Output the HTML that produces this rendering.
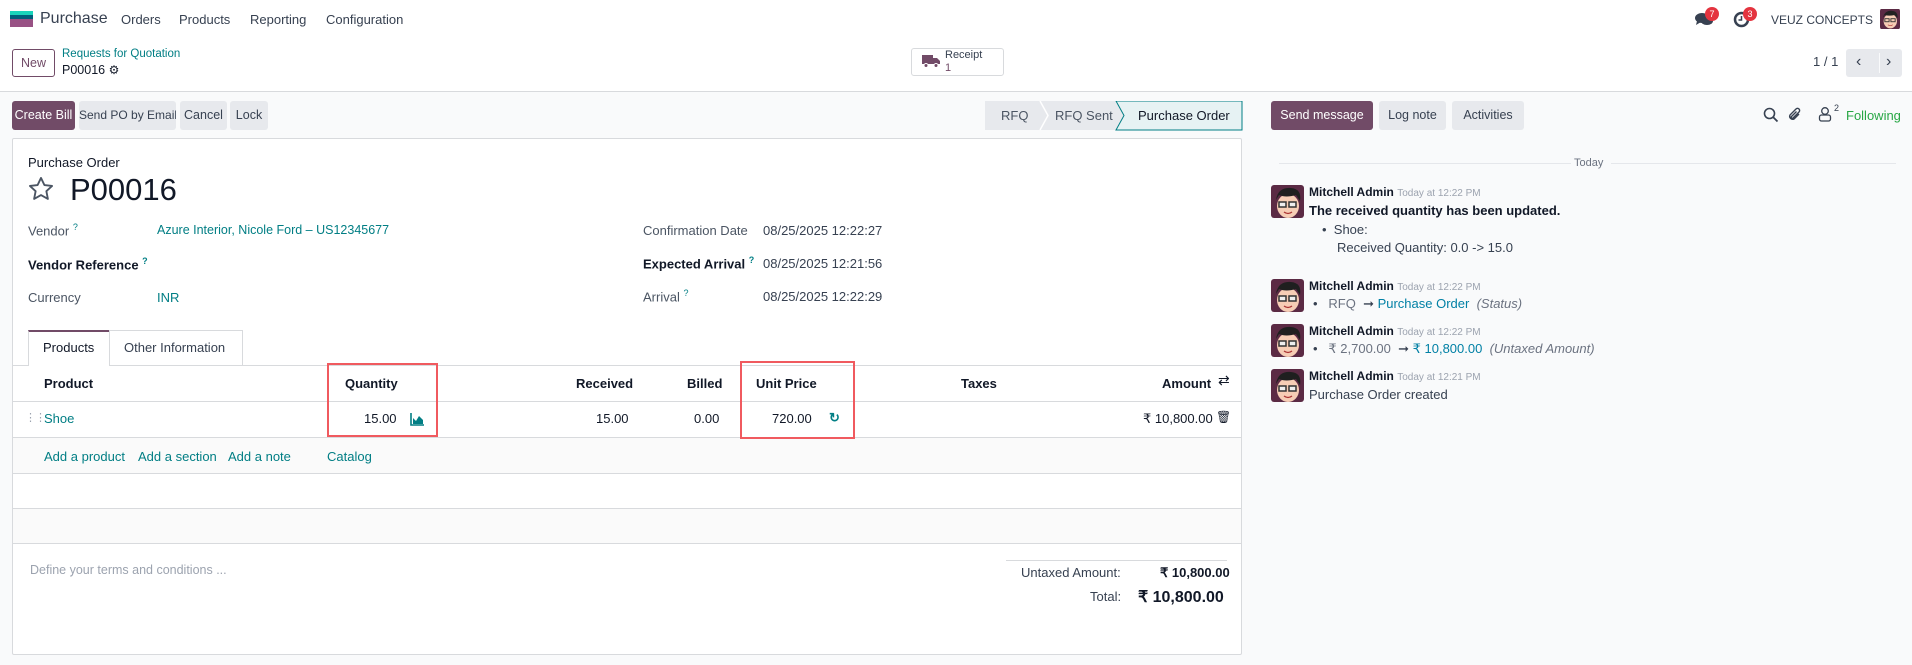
<!DOCTYPE html>
<html><head><meta charset="utf-8">
<style>
*{box-sizing:border-box;margin:0;padding:0}
body{width:1912px;height:665px;position:relative;overflow:hidden;background:#f9fafb;font-family:"Liberation Sans",sans-serif;font-size:13px;color:#374151}
.a{position:absolute;white-space:nowrap}
.teal{color:#017e84}
.btn{position:absolute;height:29px;line-height:29px;border-radius:3px;background:#e7e9ed;color:#374151;font-size:12.5px;text-align:center;white-space:nowrap;overflow:hidden}
.pri{background:#714b67;color:#fff}
.lbl{color:#4b5563}
.b{font-weight:bold;color:#111827}
sup{font-size:9px;color:#017e84}
.hl{position:absolute;left:13px;width:1228px;height:1px;background:#d8dadd}
.av{position:absolute;width:33px;height:33px;border-radius:3px;overflow:hidden}
.gray{color:#9ca3af;font-size:11px}
</style></head><body>
<div class="a" style="left:0;top:0;width:1912px;height:92px;background:#fff;border-bottom:1px solid #d8dadd"></div>
<div class="a" style="left:10px;top:11px;width:23px;height:4px;background:#1ad3bb"></div>
<div class="a" style="left:10px;top:15px;width:23px;height:4px;background:#005e7a"></div>
<div class="a" style="left:10px;top:19px;width:23px;height:8px;background:#985184"></div>
<div class="a" style="left:40px;top:10px;font-size:16px;color:#374151">Purchase</div>
<div class="a" style="left:121px;top:12px;font-size:13px;color:#374151">Orders</div>
<div class="a" style="left:179px;top:12px;font-size:13px;color:#374151">Products</div>
<div class="a" style="left:250px;top:12px;font-size:13px;color:#374151">Reporting</div>
<div class="a" style="left:326px;top:12px;font-size:13px;color:#374151">Configuration</div>
<svg class="a" style="left:1694px;top:10px" width="20" height="18" viewBox="0 0 20 18"><ellipse cx="8" cy="8" rx="7" ry="5" fill="#374151"/><path d="M3 11 L2 15 L7 12Z" fill="#374151"/><ellipse cx="13" cy="11" rx="6" ry="4" fill="#374151"/></svg>
<div class="a" style="left:1705px;top:7px;width:14px;height:14px;border-radius:7px;background:#e4343f;color:#fff;font-size:9px;text-align:center;line-height:14px">7</div>
<svg class="a" style="left:1733px;top:11px" width="17" height="17" viewBox="0 0 17 17"><circle cx="8.5" cy="8.5" r="6.5" fill="none" stroke="#374151" stroke-width="2.5"/><path d="M8.5 5v4h-3" stroke="#374151" stroke-width="1.5" fill="none"/></svg>
<div class="a" style="left:1743px;top:7px;width:14px;height:14px;border-radius:7px;background:#e4343f;color:#fff;font-size:9px;text-align:center;line-height:14px">3</div>
<div class="a" style="left:1771px;top:13px;font-size:12px;color:#374151">VEUZ CONCEPTS</div>
<div class="av" style="left:1880px;top:8px;width:20px;height:22px"><svg width="20" height="22" viewBox="0 0 33 33"><rect width="33" height="33" fill="#5b2a44"/><ellipse cx="17" cy="20" rx="11" ry="12" fill="#f6cdb5"/><path d="M5 14 Q8 2 20 3 Q30 4 29 15 L24 10 Q15 12 8 10Z" fill="#222"/><rect x="8" y="16" width="7" height="5" fill="none" stroke="#333" stroke-width="1.5"/><rect x="18" y="16" width="7" height="5" fill="none" stroke="#333" stroke-width="1.5"/><path d="M13 26 Q17 29 21 26" stroke="#a33" fill="none"/></svg></div>
<div class="a" style="left:12px;top:49px;width:43px;height:28px;border:1px solid #714b67;border-radius:3px;text-align:center;line-height:26px;color:#714b67;font-size:12.5px">New</div>
<div class="a teal" style="left:62px;top:48px;font-size:11.5px">Requests for Quotation</div>
<div class="a" style="left:62px;top:63px;font-size:12.5px;color:#111827">P00016 <span style="font-size:12px">⚙</span></div>
<div class="a" style="left:911px;top:48px;width:93px;height:28px;border:1px solid #d8dadd;border-radius:3px;background:#fff"></div>
<svg class="a" style="left:922px;top:55px" width="18" height="13" viewBox="0 0 18 13"><rect x="0" y="0" width="11" height="9" fill="#714b67"/><path d="M11 3h4l3 3v3h-7z" fill="#714b67"/><circle cx="4" cy="10.5" r="2" fill="#714b67" stroke="#fff"/><circle cx="14" cy="10.5" r="2" fill="#714b67" stroke="#fff"/></svg>
<div class="a" style="left:945px;top:49px;font-size:11px;color:#374151;line-height:13px">Receipt<br><span style="color:#714b67">1</span></div>
<div class="a" style="left:1813px;top:54px;font-size:13px;color:#374151">1 / 1</div>
<div class="a" style="left:1846px;top:49px;width:56px;height:28px;background:#e7e9ed;border-radius:3px"></div>
<div class="a" style="left:1856px;top:53px;font-size:16px;color:#374151">‹</div>
<div class="a" style="left:1879px;top:53px;width:1px;height:20px;background:#f9fafb"></div>
<div class="a" style="left:1886px;top:53px;font-size:16px;color:#374151">›</div>
<div class="btn pri" style="left:12px;top:101px;width:63px">Create Bill</div>
<div class="btn" style="left:79px;top:101px;width:97px;font-size:12px">Send PO by Email</div>
<div class="btn" style="left:180px;top:101px;width:47px">Cancel</div>
<div class="btn" style="left:230px;top:101px;width:38px">Lock</div>
<svg class="a" style="left:985px;top:101px" width="258" height="30" viewBox="0 0 258 30"><rect x="0" y="0" width="160" height="29" fill="#e7e9ed"/><path d="M55 0 L63 14.5 L55 29" stroke="#fff" fill="none" stroke-width="1.5"/><path d="M131 0 L257 0 L257 29 L131 29 L139 14.5Z" fill="#e6f2f3" stroke="#017e84"/></svg>
<div class="a" style="left:1001px;top:108px;color:#4b5563">RFQ</div>
<div class="a" style="left:1055px;top:108px;color:#4b5563">RFQ Sent</div>
<div class="a" style="left:1138px;top:108px;color:#111827">Purchase Order</div>
<div class="a" style="left:12px;top:138px;width:1230px;height:517px;background:#fff;border:1px solid #d8dadd;border-radius:2px"></div>
<div class="a" style="left:28px;top:155px;font-size:13px;color:#111827">Purchase Order</div>
<svg class="a" style="left:27px;top:175px" width="28" height="28" viewBox="0 0 24 24"><path d="M12 2.5l2.9 6.1 6.6.8-4.9 4.5 1.3 6.6L12 17.2l-5.9 3.3 1.3-6.6-4.9-4.5 6.6-.8z" fill="none" stroke="#4b5563" stroke-width="1.6" stroke-linejoin="round"/></svg>
<div class="a" style="left:70px;top:172px;font-size:31px;color:#111827">P00016</div>
<div class="a lbl" style="left:28px;top:222px">Vendor <sup>?</sup></div>
<div class="a teal" style="left:157px;top:223px;font-size:12.5px">Azure Interior, Nicole Ford – US12345677</div>
<div class="a b" style="left:28px;top:256px">Vendor Reference <sup>?</sup></div>
<div class="a lbl" style="left:28px;top:290px">Currency</div>
<div class="a teal" style="left:157px;top:290px">INR</div>
<div class="a lbl" style="left:643px;top:223px">Confirmation Date</div>
<div class="a" style="left:763px;top:223px">08/25/2025 12:22:27</div>
<div class="a b" style="left:643px;top:255px">Expected Arrival <sup>?</sup></div>
<div class="a" style="left:763px;top:256px">08/25/2025 12:21:56</div>
<div class="a lbl" style="left:643px;top:288px">Arrival <sup>?</sup></div>
<div class="a" style="left:763px;top:289px">08/25/2025 12:22:29</div>
<div class="a" style="left:13px;top:365px;width:1228px;height:1px;background:#d8dadd"></div>
<div class="a" style="left:28px;top:330px;width:82px;height:36px;background:#fff;border:1px solid #d8dadd;border-bottom:none;border-top:2px solid #714b67"></div>
<div class="a" style="left:43px;top:340px;color:#111827">Products</div>
<div class="a" style="left:109px;top:330px;width:134px;height:35px;border:1px solid #d8dadd;border-bottom:none"></div>
<div class="a" style="left:124px;top:340px;color:#374151">Other Information</div>
<div class="a b" style="left:44px;top:376px">Product</div>
<div class="a b" style="left:345px;top:376px">Quantity</div>
<div class="a b" style="left:576px;top:376px">Received</div>
<div class="a b" style="left:687px;top:376px">Billed</div>
<div class="a b" style="left:756px;top:376px">Unit Price</div>
<div class="a b" style="left:961px;top:376px">Taxes</div>
<div class="a b" style="left:1162px;top:376px">Amount</div>
<div class="a" style="left:1218px;top:372px;font-size:14px;color:#111827">⇄</div>
<div class="hl" style="top:401px"></div>
<div class="a" style="left:25px;top:411px;color:#9ca3af;font-size:11px;letter-spacing:-1px">⋮⋮</div>
<div class="a teal" style="left:44px;top:411px">Shoe</div>
<div class="a" style="left:364px;top:411px;color:#111827">15.00</div>
<svg class="a" style="left:410px;top:413px" width="14" height="13" viewBox="0 0 14 13"><path d="M1 0v12h13" stroke="#017e84" stroke-width="1.6" fill="none"/><path d="M3 11V5l3 3 3-5 4 4v4z" fill="#017e84"/></svg>
<div class="a" style="left:596px;top:411px;color:#111827">15.00</div>
<div class="a" style="left:694px;top:411px;color:#111827">0.00</div>
<div class="a" style="left:772px;top:411px;color:#111827">720.00</div>
<div class="a teal" style="left:829px;top:410px;font-size:13px;font-weight:bold">↻</div>
<div class="a" style="left:1143px;top:411px;color:#111827">₹ 10,800.00</div>
<div class="a" style="left:1216px;top:410px;font-size:12px;color:#111827">🗑</div>
<div class="hl" style="top:437px"></div>
<div class="a" style="left:13px;top:438px;width:1228px;height:35px;background:#fafafa"></div>
<div class="a teal" style="left:44px;top:449px">Add a product</div>
<div class="a teal" style="left:138px;top:449px">Add a section</div>
<div class="a teal" style="left:228px;top:449px">Add a note</div>
<div class="a teal" style="left:327px;top:449px">Catalog</div>
<div class="hl" style="top:473px"></div>
<div class="hl" style="top:508px"></div>
<div class="a" style="left:13px;top:509px;width:1228px;height:34px;background:#fafafa"></div>
<div class="hl" style="top:543px"></div>
<div class="a" style="left:327px;top:363px;width:111px;height:74px;border:2px solid #f05a5f"></div>
<div class="a" style="left:740px;top:361px;width:115px;height:78px;border:2px solid #f05a5f"></div>
<div class="a" style="left:30px;top:563px;color:#9ca3af;font-size:12.5px">Define your terms and conditions ...</div>
<div class="a" style="left:1006px;top:560px;width:221px;height:1px;background:#d8dadd"></div>
<div class="a" style="left:1021px;top:565px;color:#374151">Untaxed Amount:</div>
<div class="a b" style="left:1160px;top:565px">₹ 10,800.00</div>
<div class="a" style="left:1090px;top:589px;color:#374151">Total:</div>
<div class="a b" style="left:1138px;top:587px;font-size:16px">₹ 10,800.00</div>
<div class="btn pri" style="left:1271px;top:101px;width:102px">Send message</div>
<div class="btn" style="left:1379px;top:101px;width:67px">Log note</div>
<div class="btn" style="left:1452px;top:101px;width:72px">Activities</div>
<svg class="a" style="left:1763px;top:107px" width="16" height="16" viewBox="0 0 16 16"><circle cx="6.5" cy="6.5" r="5" fill="none" stroke="#374151" stroke-width="1.6"/><path d="M10 10l4.5 4.5" stroke="#374151" stroke-width="1.8"/></svg>
<svg class="a" style="left:1787px;top:106px" width="16" height="17" viewBox="0 0 16 17"><path d="M12 8l-5 5a3 3 0 01-4-4l6-6a2 2 0 013 3l-6 6a1 1 0 01-1.5-1.5l5-5" fill="none" stroke="#374151" stroke-width="1.4"/></svg>
<svg class="a" style="left:1818px;top:106px" width="14" height="16" viewBox="0 0 14 16"><circle cx="7" cy="5" r="3.3" fill="none" stroke="#374151" stroke-width="1.3"/><rect x="1.5" y="9" width="11" height="6" rx="2" fill="none" stroke="#374151" stroke-width="1.3"/></svg>
<div class="a" style="left:1834px;top:103px;font-size:9px;color:#374151">2</div>
<div class="a" style="left:1846px;top:108px;color:#28a745;font-size:13px">Following</div>
<div class="a" style="left:1279px;top:163px;width:292px;height:1px;background:#e5e7eb"></div>
<div class="a" style="left:1574px;top:157px;color:#6b7280;font-size:11px">Today</div>
<div class="a" style="left:1611px;top:163px;width:285px;height:1px;background:#e5e7eb"></div>
<svg width="0" height="0" style="position:absolute"><defs><g id="face"><rect width="33" height="33" fill="#5b2a44"/><ellipse cx="17" cy="21" rx="11" ry="12" fill="#f6cdb5"/><path d="M5 15 Q7 2 20 3 Q31 4 29 16 L25 10 Q15 13 8 10Z" fill="#1f1f1f"/><rect x="8" y="17" width="7" height="5" fill="#eee" stroke="#333" stroke-width="1.5"/><rect x="18" y="17" width="7" height="5" fill="#eee" stroke="#333" stroke-width="1.5"/><path d="M13 27 Q17 30 21 27" stroke="#a33" fill="none" stroke-width="1.3"/></g></defs></svg>
<svg class="av" style="left:1271px;top:185px" viewBox="0 0 33 33"><use href="#face"/></svg>
<div class="a b" style="left:1309px;top:185px;font-size:12px">Mitchell Admin <span class="gray" style="font-weight:normal;font-size:10px">Today at 12:22 PM</span></div>
<div class="a b" style="left:1309px;top:203px;font-size:13px">The received quantity has been updated.</div>
<div class="a" style="left:1322px;top:222px;color:#374151">• &nbsp;Shoe:</div>
<div class="a" style="left:1337px;top:240px;color:#374151">Received Quantity: 0.0 -&gt; 15.0</div>
<svg class="av" style="left:1271px;top:279px" viewBox="0 0 33 33"><use href="#face"/></svg>
<div class="a b" style="left:1309px;top:279px;font-size:12px">Mitchell Admin <span class="gray" style="font-weight:normal;font-size:10px">Today at 12:22 PM</span></div>
<div class="a" style="left:1313px;top:296px;color:#374151">• &nbsp;&nbsp;<span style="color:#6b7280">RFQ</span> &nbsp;➞ <span style="color:#0180a5">Purchase Order</span> &nbsp;<i style="color:#6b7280">(Status)</i></div>
<svg class="av" style="left:1271px;top:324px" viewBox="0 0 33 33"><use href="#face"/></svg>
<div class="a b" style="left:1309px;top:324px;font-size:12px">Mitchell Admin <span class="gray" style="font-weight:normal;font-size:10px">Today at 12:22 PM</span></div>
<div class="a" style="left:1313px;top:341px;color:#374151">• &nbsp;&nbsp;<span style="color:#6b7280">₹ 2,700.00</span> &nbsp;➞ <span style="color:#0180a5">₹ 10,800.00</span> &nbsp;<i style="color:#6b7280">(Untaxed Amount)</i></div>
<svg class="av" style="left:1271px;top:369px" viewBox="0 0 33 33"><use href="#face"/></svg>
<div class="a b" style="left:1309px;top:369px;font-size:12px">Mitchell Admin <span class="gray" style="font-weight:normal;font-size:10px">Today at 12:21 PM</span></div>
<div class="a" style="left:1309px;top:387px;color:#374151">Purchase Order created</div>
</body></html>
